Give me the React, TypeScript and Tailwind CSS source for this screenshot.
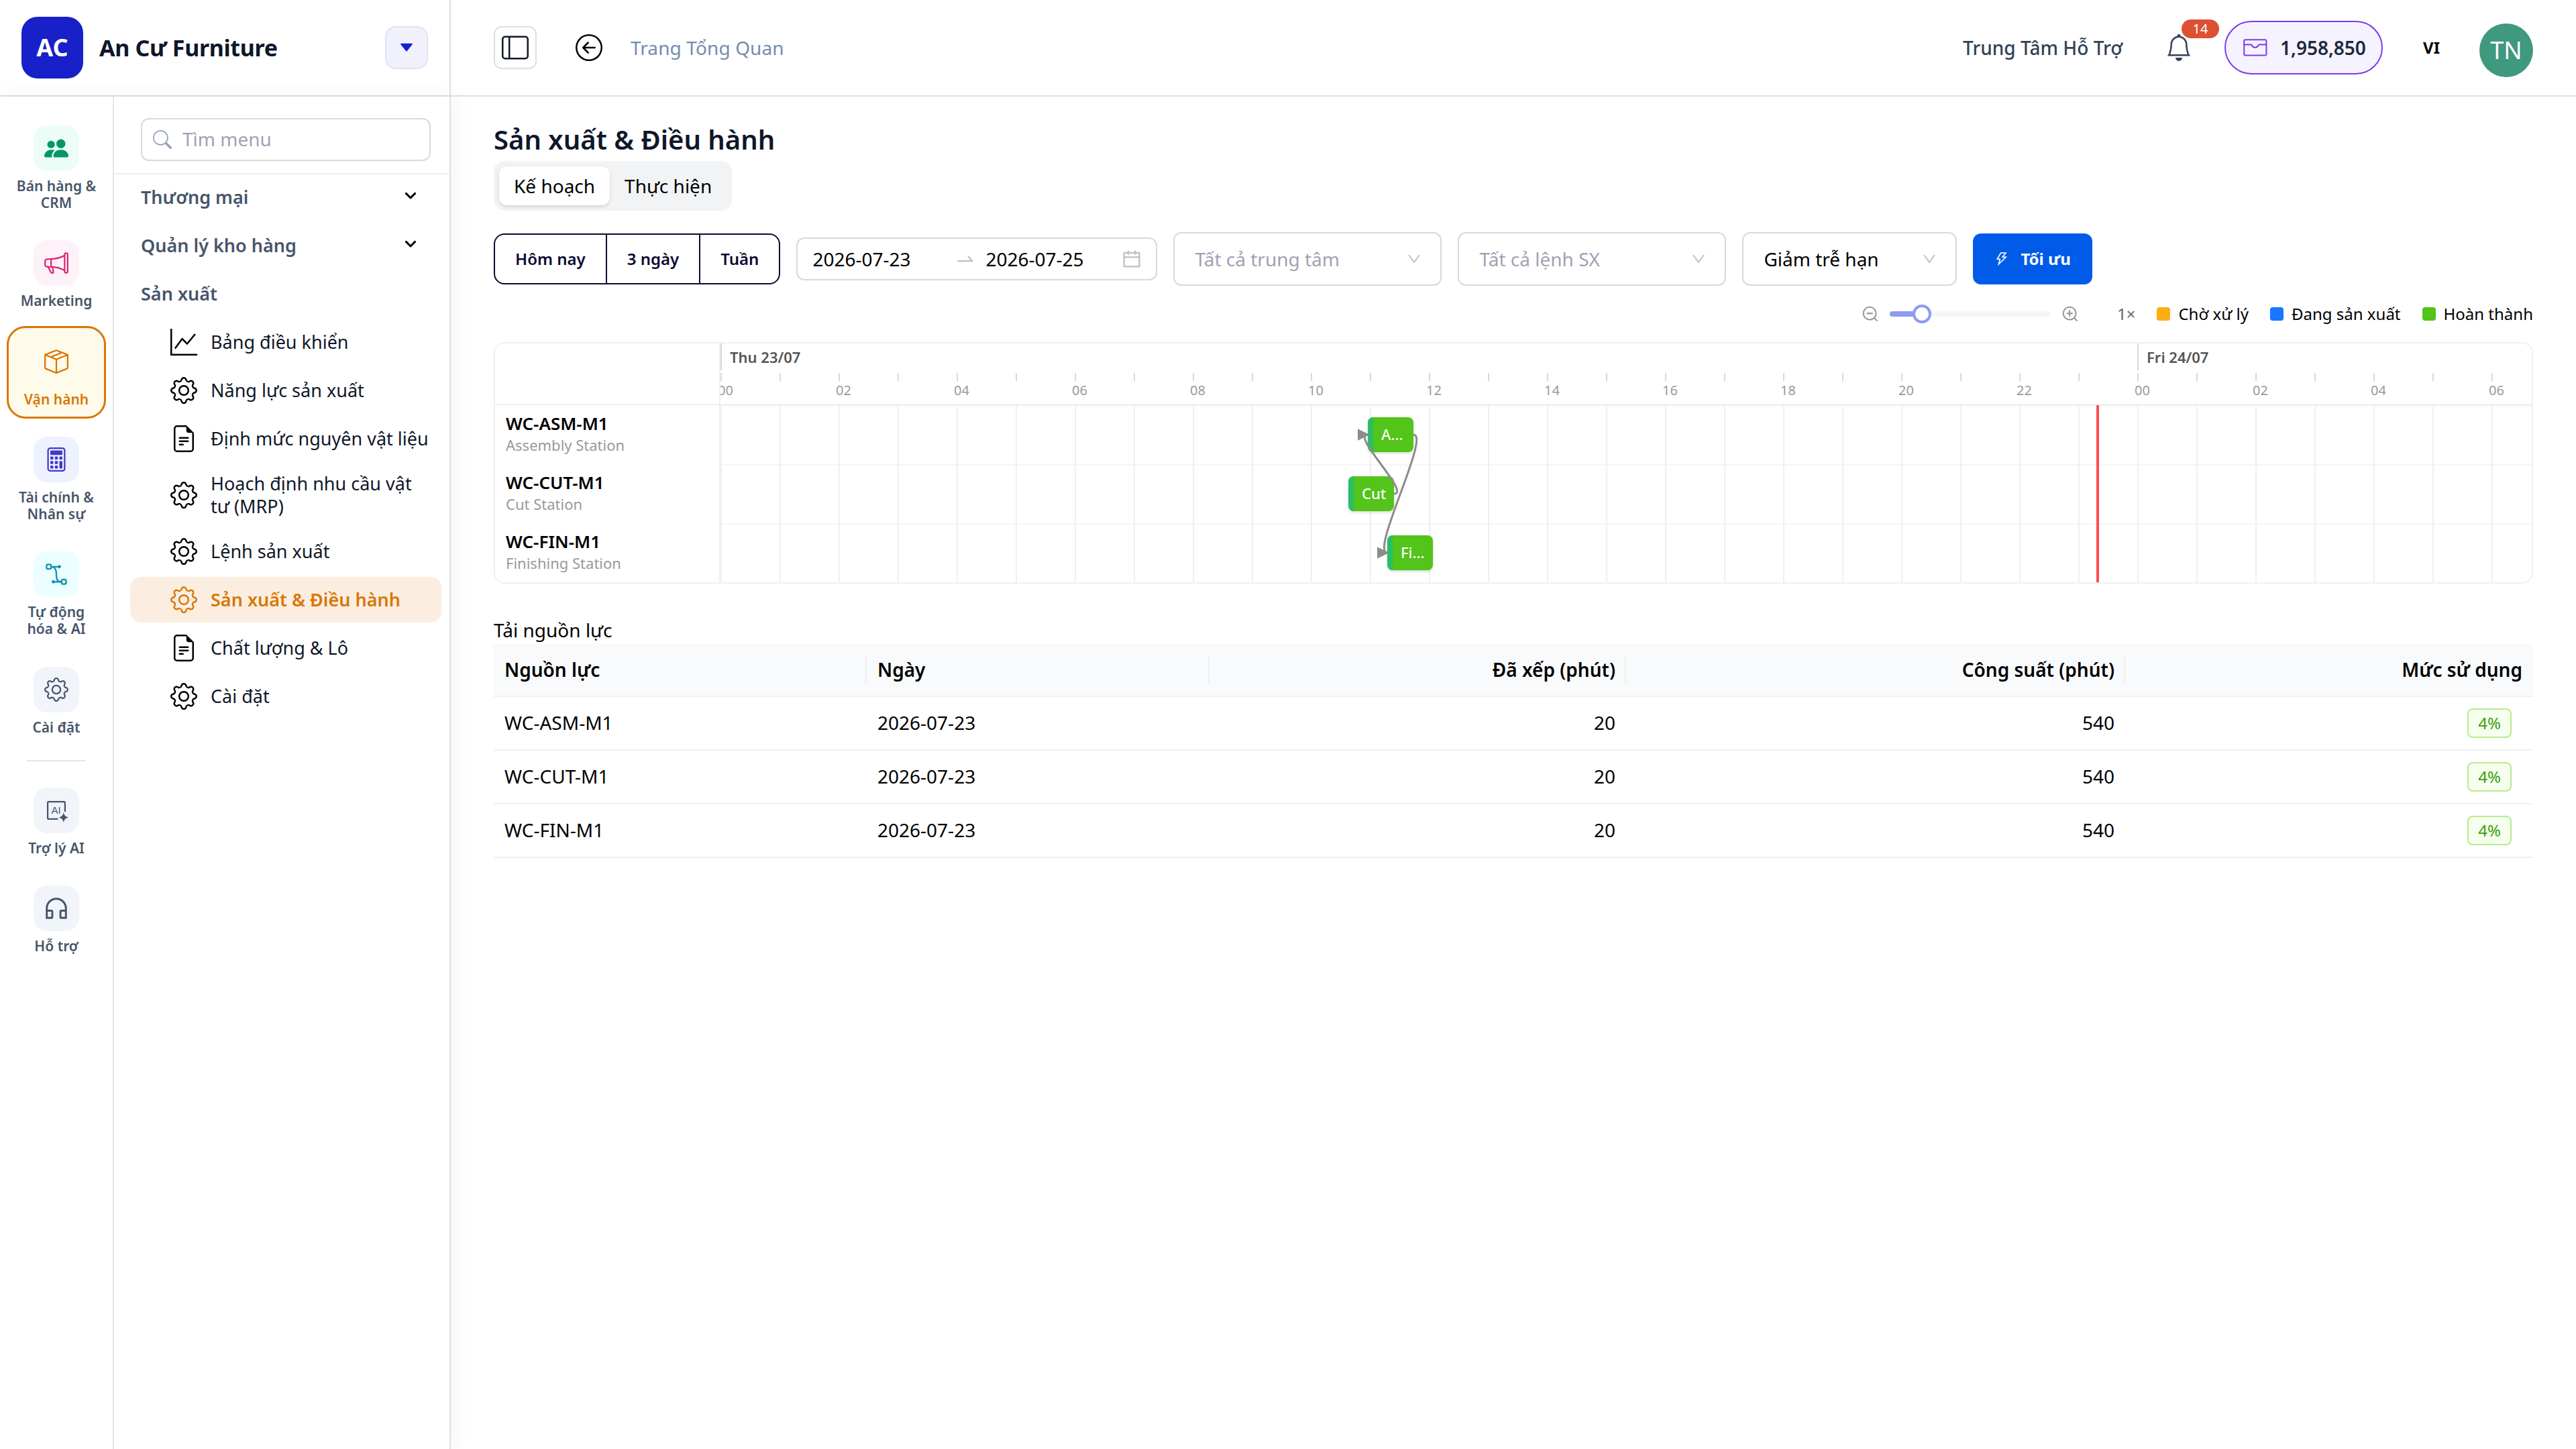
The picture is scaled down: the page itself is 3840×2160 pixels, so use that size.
import type { ComponentType, ReactNode } from "react";
import clsx from "clsx";
import {
  AiOutlineCalendar,
  AiOutlineCustomerService,
  AiOutlineDown,
  AiOutlineSwapRight,
  AiOutlineThunderbolt,
  AiOutlineZoomIn,
  AiOutlineZoomOut,
} from "react-icons/ai";
import {
  BsArrowLeftCircle,
  BsBell,
  BsBezier2,
  BsBoxSeam,
  BsCalculator,
  BsFileEarmarkText,
  BsGear,
  BsGraphUp,
  BsLayoutSidebar,
  BsMegaphone,
  BsPeopleFill,
  BsSearch,
} from "react-icons/bs";

type IconType = ComponentType<{ className?: string }>;

const AiSparkIcon = ({ className }: { className?: string }) => (
  <svg viewBox="0 0 24 24" fill="none" className={clsx("overflow-visible", className)}>
    <path
      d="M13.6 20.6H4.4a1 1 0 0 1-1-1V4.4a1 1 0 0 1 1-1h15.2a1 1 0 0 1 1 1v9"
      stroke="currentColor"
      strokeWidth="1.5"
    />
    <text
      x="7"
      y="15.2"
      fontSize="10"
      fill="currentColor"
      fontFamily="Liberation Sans, sans-serif"
    >
      AI
    </text>
    <path
      d="M19.2 14c.7 3 1.8 4.2 4.9 5-3.1.8-4.2 2-4.9 5-.7-3-1.8-4.2-4.9-5 3.1-.8 4.2-2 4.9-5z"
      fill="currentColor"
    />
  </svg>
);

const WalletIcon = ({ className }: { className?: string }) => (
  <svg viewBox="0 0 18 13" fill="none" stroke="currentColor" className={className}>
    <rect x="0.6" y="0.6" width="16.6" height="11.6" rx="1" />
    <path d="M.6 4.2h5c.5 0 .8.2.9.6a2.4 2 0 0 0 4.700 0c.1-.4.400-.6.900-.6h5.100" />
  </svg>
);

const modules: {
  label: string;
  icon: IconType;
  tile: string;
  size?: string;
  active?: boolean;
}[] = [
  { label: "Bán hàng & CRM", icon: BsPeopleFill, tile: "bg-[#ecfdf5] text-[#059669]" },
  { label: "Marketing", icon: BsMegaphone, tile: "bg-[#fdf2f8] text-[#db2777]" },
  { label: "Vận hành", icon: BsBoxSeam, tile: "text-[#d97706]", active: true },
  { label: "Tài chính & Nhân sự", icon: BsCalculator, tile: "bg-[#eef2ff] text-[#4338ca]" },
  { label: "Tự động hóa & AI", icon: BsBezier2, tile: "bg-[#ecfeff] text-[#0891b2]" },
  { label: "Cài đặt", icon: BsGear, tile: "bg-[#f1f5f9] text-[#475569]" },
];

const extras = [
  { label: "Trợ lý AI", icon: AiSparkIcon, tile: "bg-[#f1f5f9] text-[#475569]" },
  {
    label: "Hỗ trợ",
    icon: AiOutlineCustomerService,
    tile: "bg-[#f1f5f9] text-[#475569]",
    size: "size-[21px]",
  },
];

const menu: { label: string; icon: IconType; active?: boolean }[] = [
  { label: "Bảng điều khiển", icon: BsGraphUp },
  { label: "Năng lực sản xuất", icon: BsGear },
  { label: "Định mức nguyên vật liệu", icon: BsFileEarmarkText },
  { label: "Hoạch định nhu cầu vật tư (MRP)", icon: BsGear },
  { label: "Lệnh sản xuất", icon: BsGear },
  { label: "Sản xuất & Điều hành", icon: BsGear, active: true },
  { label: "Chất lượng & Lô", icon: BsFileEarmarkText },
  { label: "Cài đặt", icon: BsGear },
];

const HOUR_WIDTH = 44;
const hours = Array.from({ length: 31 }, (_, i) => i);
const pad = (n: number) => String(n).padStart(2, "0");

const stations = [
  { code: "WC-ASM-M1", name: "Assembly Station", task: "A...", start: 482.5 },
  { code: "WC-CUT-M1", name: "Cut Station", task: "Cut", start: 468 },
  { code: "WC-FIN-M1", name: "Finishing Station", task: "Fi...", start: 497 },
];

const legend = [
  { label: "Chờ xử lý", color: "bg-[#faad14]" },
  { label: "Đang sản xuất", color: "bg-[#1677ff]" },
  { label: "Hoàn thành", color: "bg-[#52c41a]" },
];

const loads = [
  { code: "WC-ASM-M1", date: "2026-07-23", planned: 20, capacity: 540, usage: "4%" },
  { code: "WC-CUT-M1", date: "2026-07-23", planned: 20, capacity: 540, usage: "4%" },
  { code: "WC-FIN-M1", date: "2026-07-23", planned: 20, capacity: 540, usage: "4%" },
];

const RailItem = ({
  label,
  icon: Icon,
  tile,
  size = "size-[18px]",
  active,
}: {
  label: string;
  icon: IconType;
  tile: string;
  size?: string;
  active?: boolean;
}) => (
  <div
    className={clsx(
      "flex w-[74px] flex-col items-center gap-[5px] rounded-[14px] border-[1.5px] px-1 pt-2 pb-[6.5px]",
      active ? "border-[#d97706] bg-[#fffbeb]" : "border-transparent"
    )}
  >
    <div className={clsx("flex size-[34px] items-center justify-center rounded-[10px]", tile)}>
      <Icon className={size} />
    </div>
    <span
      className={clsx(
        "w-[62px] text-center text-[10.5px] leading-[12.6px] font-semibold",
        active ? "text-[#d97706]" : "text-[#475569]"
      )}
    >
      {label}
    </span>
  </div>
);

const Select = ({
  children,
  className,
  placeholder,
}: {
  children: ReactNode;
  className: string;
  placeholder?: boolean;
}) => (
  <div
    className={clsx(
      "flex h-10 items-center justify-between rounded-md border border-[#d9d9d9] pr-[13.5px] pl-[15px]",
      className
    )}
  >
    <span className={placeholder ? "text-[#a1a1b5]" : "text-black"}>{children}</span>
    <AiOutlineDown className="size-3 text-[#bfbfbf]" />
  </div>
);

const Sidebar = () => (
  <div className="relative z-10 flex w-[336px] shrink-0 border-r border-[#dedee6] bg-white shadow-[2px_0_14px_rgba(20,50,40,0.06)]">
    {/* Module rail */}
    <div className="flex w-[85px] shrink-0 flex-col items-center gap-1 border-r border-[#e5e5ea] pt-3">
      {modules.map((m) => (
        <RailItem key={m.label} {...m} />
      ))}
      <div className="my-1.5 h-px w-11 bg-[#e4e4ea]" />
      {extras.map((m) => (
        <RailItem key={m.label} {...m} />
      ))}
    </div>

    {/* Menu */}
    <div className="flex min-w-0 flex-1 flex-col">
      <div className="border-b border-[#ededf3] px-5 pt-4 pb-[9px]">
        <div className="flex h-8 w-[216px] items-center gap-2 rounded-md border border-[#d9d9d9] px-2">
          <BsSearch className="size-3.5 text-[#94a3b8]" />
          <span className="-mt-px text-[#a1a1b5]">Tìm menu</span>
        </div>
      </div>
      <div className="flex flex-col gap-0.5 pr-1.5 pl-3 text-[13.5px]">
        {["Thương mại", "Quản lý kho hàng", "Sản xuất"].map((group) => (
          <div
            key={group}
            className="flex h-[34px] items-center justify-between pr-[17px] pl-2 font-semibold text-[#475569]"
          >
            {group}
            {group !== "Sản xuất" && (
              <svg viewBox="0 0 12 12" fill="none" className="mb-0.5 size-3">
                <path
                  d="M2.7 4.2 6 7.5l3.3-3.3"
                  stroke="black"
                  strokeWidth="1.5"
                  strokeLinecap="round"
                  strokeLinejoin="round"
                />
              </svg>
            )}
          </div>
        ))}
        {menu.map(({ label, icon: Icon, active }) => (
          <div
            key={label}
            className={clsx(
              "flex min-h-[34px] items-center gap-2.5 rounded-lg py-[6.2px] pr-2 pl-[30px] leading-[16.8px]",
              active ? "bg-[#fbeee0] font-semibold text-[#d97706]" : "text-[#0f172a]"
            )}
          >
            <Icon className={clsx("size-5 shrink-0", !active && "text-black")} />
            <span>{label}</span>
          </div>
        ))}
      </div>
    </div>
  </div>
);

const TopBar = () => (
  <div className="flex h-[72px] shrink-0 border-b border-[#dedee6]">
    <div className="flex w-[336px] items-center border-r border-[#dedee6] pr-4 pl-4">
      <div className="flex size-[46px] items-center justify-center rounded-xl bg-[#1720c9] text-lg font-bold text-white">
        AC
      </div>
      <span className="ml-3 flex-1 text-[17px] font-bold tracking-[-0.01em] text-[#0f172a]">
        An Cư Furniture
      </span>
      <div className="flex size-8 items-center justify-center rounded-lg border border-[#e0e1f6] bg-[#f1f1fb]">
        <svg viewBox="0 0 10 7" className="h-[7px] w-2.5">
          <path
            d="M1 .8h8L5 5.8z"
            fill="#1720c9"
            stroke="#1720c9"
            strokeWidth="0.9"
            strokeLinejoin="round"
          />
        </svg>
      </div>
    </div>
    <div className="flex flex-1 items-center px-8">
      <div className="flex size-8 items-center justify-center rounded-md border border-[#dedee6] text-[#0f172a]">
        <BsLayoutSidebar className="size-5" />
      </div>
      <BsArrowLeftCircle className="ml-[29px] size-5 text-black" />
      <span className="ml-[21px] flex-1 tracking-[0.05px] text-[#748bb0]">Trang Tổng Quan</span>

      <span className="font-medium text-[#334155]">Trung Tâm Hỗ Trợ</span>
      <div className="relative ml-8">
        <BsBell className="size-5 text-[#334155]" />
        <span className="absolute -top-[11px] left-3 flex h-3.5 w-7 items-center justify-center rounded-full bg-[#dd5034] text-[10px] text-white">
          14
        </span>
      </div>
      <div className="ml-6 flex h-10 w-[118px] items-center gap-[9.5px] rounded-full border border-[#7c3aed] bg-[#f5f3ff] pl-[13px] font-semibold text-[#1e293b]">
        <WalletIcon className="h-[13px] w-[18px] text-[#7c3aed]" />
        1,958,850
      </div>
      <span className="ml-[30px] text-xs font-bold text-black">VI</span>
      <div className="mt-1 ml-[29.5px] flex size-10 items-center justify-center rounded-full bg-[#3f997e] text-lg text-white">
        TN
      </div>
    </div>
  </div>
);

const Filters = () => (
  <div className="mt-4 flex items-center gap-3">
    <div className="flex h-[38px] items-stretch rounded-lg border border-[#0b0b33] text-xs font-semibold text-[#0b0b33]">
      <span className="flex items-center px-[15px]">Hôm nay</span>
      <span className="flex items-center border-x border-[#0b0b33] px-[15px]">3 ngày</span>
      <span className="flex items-center px-[15px]">Tuần</span>
    </div>
    <div className="flex h-8 w-[269px] items-center rounded-md border border-[#d9d9d9] pr-2.5 pl-[11px] text-black">
      <span className="w-[106px]">2026-07-23</span>
      <AiOutlineSwapRight className="size-4 text-[#bfbfbf]" />
      <span className="ml-[7px] flex-1">2026-07-25</span>
      <AiOutlineCalendar className="size-4 text-[#bfbfbf]" />
    </div>
    <Select className="w-[200px]" placeholder>
      Tất cả trung tâm
    </Select>
    <Select className="w-[200px]" placeholder>
      Tất cả lệnh SX
    </Select>
    <Select className="w-40">Giảm trễ hạn</Select>
    <button className="flex h-[38px] items-center gap-2 rounded-md bg-[#005ce8] pr-4 pl-[15.5px] text-xs font-bold text-white">
      <AiOutlineThunderbolt className="size-3" />
      Tối ưu
    </button>
  </div>
);

const Toolbar = () => (
  <div className="my-2 flex h-[26px] items-center justify-end text-xs text-black">
    <AiOutlineZoomOut className="size-3.5 text-[#999]" />
    <div className="relative ml-[7.5px] h-1 w-[120px] rounded-sm bg-[#f5f5f5]">
      <div className="h-1 w-6 rounded-sm bg-[#8e9bf0]" />
      <div className="absolute -top-[5px] left-[17px] size-3.5 rounded-full border-2 border-[#8e9bf0] bg-white" />
    </div>
    <AiOutlineZoomIn className="ml-[7.5px] size-3.5 text-[#999]" />
    <span className="ml-7 text-[#666]">1×</span>
    <div className="ml-4 flex gap-4">
      {legend.map(({ label, color }) => (
        <span key={label} className="flex items-center gap-1.5">
          <i className={clsx("size-2.5 rounded-xs", color)} />
          {label}
        </span>
      ))}
    </div>
  </div>
);

const Gantt = () => (
  <div className="flex h-[180px] overflow-hidden rounded-lg border border-[#f0f0f0]">
    <div className="w-[168px] shrink-0 border-r border-[#f0f0f0]">
      <div className="h-[46px] border-b border-[#f0f0f0]" />
      {stations.map((s) => (
        <div key={s.code} className="flex h-11 flex-col justify-center px-2 pb-[1.5px]">
          <span className="mb-px text-[13px] leading-[15px] font-semibold text-black">
            {s.code}
          </span>
          <span className="text-[11px] leading-[15px] text-[#999]">{s.name}</span>
        </div>
      ))}
    </div>

    <div className="relative min-w-0 flex-1 overflow-hidden">
      {/* Time scale */}
      <div className="h-[46px] border-b border-[#f0f0f0]">
        <div className="flex h-[22px] text-[11px] leading-5 font-semibold text-[#555]">
          <span className="h-5 w-[1056px] shrink-0 border-l border-[#d9d9d9] pl-1.5">
            Thu 23/07
          </span>
          <span className="h-5 border-l border-[#d9d9d9] pl-1.5">Fri 24/07</span>
        </div>
        <div className="flex">
          {hours.map((h) => (
            <div key={h} className="h-[22px] w-11 shrink-0 text-[10px] leading-[14px] text-[#999]">
              <div className="h-1.5 border-l border-[#d9d9d9]" />
              {h % 2 === 0 && <div className="-ml-0.5">{pad(h % 24)}</div>}
            </div>
          ))}
        </div>
      </div>

      {/* Rows */}
      {stations.map((s) => (
        <div key={s.code} className="relative h-11 border-t border-[#f5f5f5]">
          <div className="-mt-px flex h-11">
            {hours.map((h) => (
              <div key={h} className="w-11 shrink-0 border-l border-[#f0f0f0]" />
            ))}
          </div>
          <div
            className="absolute top-2 flex h-[26px] w-[34px] items-center overflow-hidden rounded bg-[#52c41a] text-[11px] font-medium text-white shadow-[0_1px_2px_rgba(0,0,0,0.15)]"
            style={{ left: s.start }}
          >
            <i className="mr-1.5 h-full w-1 bg-[#28bf67]" />
            {s.task}
          </div>
        </div>
      ))}

      {/* Task links */}
      <svg className="absolute top-[46px] left-0 h-[132px] w-full" fill="none">
        <defs>
          <marker
            id="arrow"
            viewBox="0 0 10 10"
            refX="8.5"
            refY="5"
            markerWidth="6"
            markerHeight="6"
            orient="auto"
          >
            <path d="M0 0 10 5 0 10z" fill="#8c8c8c" />
          </marker>
        </defs>
        {["M502 66C515 66 469.5 22 482.5 22", "M516.5 22C529.5 22 484 110 497 110"].map((d) => (
          <path key={d} d={d} stroke="#8c8c8c" strokeWidth="1.5" markerEnd="url(#arrow)" />
        ))}
      </svg>

      {/* Now */}
      <div
        className="absolute top-[46px] h-[132px] w-0.5 bg-[#ff4d4f]"
        style={{ left: 23.3 * HOUR_WIDTH + 0.3 }}
      />
    </div>
  </div>
);

const LoadTable = () => (
  <table className="w-full table-fixed border-collapse text-black">
    <colgroup>
      <col className="w-[278px]" />
      <col className="w-[255.5px]" />
      <col className="w-[310.5px]" />
      <col className="w-[372px]" />
      <col />
    </colgroup>
    <thead>
      <tr className="h-[39px] border-b border-[#f0f0f0] bg-[#f8fafc]">
        {["Nguồn lực", "Ngày", "Đã xếp (phút)", "Công suất (phút)", "Mức sử dụng"].map((h, i) => (
          <th
            key={h}
            className={clsx("relative px-2 pb-px font-semibold", i < 2 ? "text-left" : "text-right")}
          >
            {h}
            {i < 4 && <i className="absolute top-2 right-0 h-[22px] w-px bg-[#f0f0f0]" />}
          </th>
        ))}
      </tr>
    </thead>
    <tbody>
      {loads.map((row) => (
        <tr key={row.code} className="h-10 border-b border-[#f0f0f0]">
          <td className="px-2 pb-px">{row.code}</td>
          <td className="px-2 pb-px">{row.date}</td>
          <td className="px-2 pb-px text-right">{row.planned}</td>
          <td className="px-2 pb-px text-right">{row.capacity}</td>
          <td className="px-2">
            <div className="mr-2 ml-auto flex h-[22px] w-[33px] items-center justify-center rounded border border-[#b7eb8f] bg-[#f6ffed] text-xs text-[#389e0d]">
              {row.usage}
            </div>
          </td>
        </tr>
      ))}
    </tbody>
  </table>
);

export default function App() {
  return (
    <div className="flex h-[1080px] w-[1920px] flex-col overflow-hidden bg-white font-['Noto_Sans',sans-serif] text-sm [zoom:2]">
      <TopBar />
      <div className="flex min-h-0 flex-1">
        <Sidebar />
        <main className="min-w-0 flex-1 px-8 pt-4">
          <h1 className="text-xl leading-8 font-semibold text-[#0f172a]">
            Sản xuất &amp; Điều hành
          </h1>
          <div className="flex h-[37px] w-[177.5px] rounded-lg bg-[#f2f3f5] p-1 whitespace-nowrap text-black">
            <span className="flex items-center rounded-md bg-white px-[11px] shadow-sm">
              Kế hoạch
            </span>
            <span className="flex items-center px-[11px]">Thực hiện</span>
          </div>
          <Filters />
          <Toolbar />
          <Gantt />
          <h2 className="mt-6 leading-[21px] text-black">Tải nguồn lực</h2>
          <LoadTable />
        </main>
      </div>
    </div>
  );
}
